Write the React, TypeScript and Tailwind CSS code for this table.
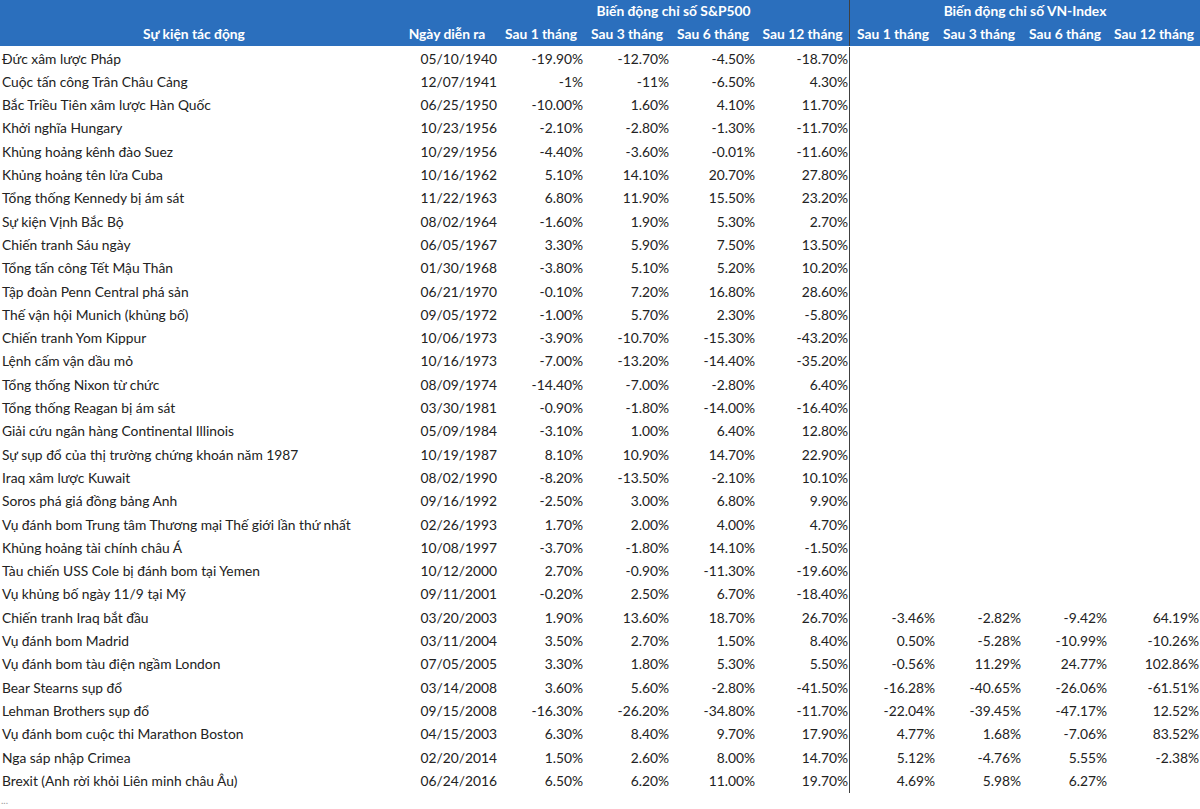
import React from "react";

type Row = [string, string, string[], string[]];

const rows: Row[] = [
  ["Đức xâm lược Pháp", "05/10/1940", ["-19.90%", "-12.70%", "-4.50%", "-18.70%"], []],
  ["Cuộc tấn công Trân Châu Cảng", "12/07/1941", ["-1%", "-11%", "-6.50%", "4.30%"], []],
  ["Bắc Triều Tiên xâm lược Hàn Quốc", "06/25/1950", ["-10.00%", "1.60%", "4.10%", "11.70%"], []],
  ["Khởi nghĩa Hungary", "10/23/1956", ["-2.10%", "-2.80%", "-1.30%", "-11.70%"], []],
  ["Khủng hoảng kênh đào Suez", "10/29/1956", ["-4.40%", "-3.60%", "-0.01%", "-11.60%"], []],
  ["Khủng hoảng tên lửa Cuba", "10/16/1962", ["5.10%", "14.10%", "20.70%", "27.80%"], []],
  ["Tổng thống Kennedy bị ám sát", "11/22/1963", ["6.80%", "11.90%", "15.50%", "23.20%"], []],
  ["Sự kiện Vịnh Bắc Bộ", "08/02/1964", ["-1.60%", "1.90%", "5.30%", "2.70%"], []],
  ["Chiến tranh Sáu ngày", "06/05/1967", ["3.30%", "5.90%", "7.50%", "13.50%"], []],
  ["Tổng tấn công Tết Mậu Thân", "01/30/1968", ["-3.80%", "5.10%", "5.20%", "10.20%"], []],
  ["Tập đoàn Penn Central phá sản", "06/21/1970", ["-0.10%", "7.20%", "16.80%", "28.60%"], []],
  ["Thế vận hội Munich (khủng bố)", "09/05/1972", ["-1.00%", "5.70%", "2.30%", "-5.80%"], []],
  ["Chiến tranh Yom Kippur", "10/06/1973", ["-3.90%", "-10.70%", "-15.30%", "-43.20%"], []],
  ["Lệnh cấm vận dầu mỏ", "10/16/1973", ["-7.00%", "-13.20%", "-14.40%", "-35.20%"], []],
  ["Tổng thống Nixon từ chức", "08/09/1974", ["-14.40%", "-7.00%", "-2.80%", "6.40%"], []],
  ["Tổng thống Reagan bị ám sát", "03/30/1981", ["-0.90%", "-1.80%", "-14.00%", "-16.40%"], []],
  ["Giải cứu ngân hàng Continental Illinois", "05/09/1984", ["-3.10%", "1.00%", "6.40%", "12.80%"], []],
  ["Sự sụp đổ của thị trường chứng khoán năm 1987", "10/19/1987", ["8.10%", "10.90%", "14.70%", "22.90%"], []],
  ["Iraq xâm lược Kuwait", "08/02/1990", ["-8.20%", "-13.50%", "-2.10%", "10.10%"], []],
  ["Soros phá giá đồng bảng Anh", "09/16/1992", ["-2.50%", "3.00%", "6.80%", "9.90%"], []],
  ["Vụ đánh bom Trung tâm Thương mại Thế giới lần thứ nhất", "02/26/1993", ["1.70%", "2.00%", "4.00%", "4.70%"], []],
  ["Khủng hoảng tài chính châu Á", "10/08/1997", ["-3.70%", "-1.80%", "14.10%", "-1.50%"], []],
  ["Tàu chiến USS Cole bị đánh bom tại Yemen", "10/12/2000", ["2.70%", "-0.90%", "-11.30%", "-19.60%"], []],
  ["Vụ khủng bố ngày 11/9 tại Mỹ", "09/11/2001", ["-0.20%", "2.50%", "6.70%", "-18.40%"], []],
  ["Chiến tranh Iraq bắt đầu", "03/20/2003", ["1.90%", "13.60%", "18.70%", "26.70%"], ["-3.46%", "-2.82%", "-9.42%", "64.19%"]],
  ["Vụ đánh bom Madrid", "03/11/2004", ["3.50%", "2.70%", "1.50%", "8.40%"], ["0.50%", "-5.28%", "-10.99%", "-10.26%"]],
  ["Vụ đánh bom tàu điện ngầm London", "07/05/2005", ["3.30%", "1.80%", "5.30%", "5.50%"], ["-0.56%", "11.29%", "24.77%", "102.86%"]],
  ["Bear Stearns sụp đổ", "03/14/2008", ["3.60%", "5.60%", "-2.80%", "-41.50%"], ["-16.28%", "-40.65%", "-26.06%", "-61.51%"]],
  ["Lehman Brothers sụp đổ", "09/15/2008", ["-16.30%", "-26.20%", "-34.80%", "-11.70%"], ["-22.04%", "-39.45%", "-47.17%", "12.52%"]],
  ["Vụ đánh bom cuộc thi Marathon Boston", "04/15/2003", ["6.30%", "8.40%", "9.70%", "17.90%"], ["4.77%", "1.68%", "-7.06%", "83.52%"]],
  ["Nga sáp nhập Crimea", "02/20/2014", ["1.50%", "2.60%", "8.00%", "14.70%"], ["5.12%", "-4.76%", "5.55%", "-2.38%"]],
  ["Brexit (Anh rời khỏi Liên minh châu Âu)", "06/24/2016", ["6.50%", "6.20%", "11.00%", "19.70%"], ["4.69%", "5.98%", "6.27%", ""]],
];

const sub = ["Sau 1 tháng", "Sau 3 tháng", "Sau 6 tháng", "Sau 12 tháng"];
const grid =
  "grid grid-cols-[388px_110px_86px_86px_86px_94px_86px_86px_86px_92px]";

export default function App() {
  return (
    <div
      className="w-[1200px] h-[809px] bg-white overflow-hidden text-[#222222] text-[13.8px]"
      style={{ fontFamily: "Lato, 'Noto Sans', sans-serif" }}
    >
      <div className="bg-[#2b6fbd] text-white font-bold">
        <div className={`${grid} h-[23px] items-center`}>
          <div className="col-span-2" />
          <div className="col-span-4 h-full flex items-center justify-center border-r border-[#404040]">
            Biến động chỉ số S&amp;P500
          </div>
          <div className="col-span-4 text-center">Biến động chỉ số VN-Index</div>
        </div>
        <div className={`${grid} h-[23.3px] items-center`}>
          <div className="text-center">Sự kiện tác động</div>
          <div className="text-center pl-[8px]">Ngày diễn ra</div>
          {sub.map((s, i) => (
            <div
              key={"a" + i}
              className={`text-center h-full flex items-center justify-center ${i === 3 ? "border-r border-[#404040]" : ""}`}
            >
              {s}
            </div>
          ))}
          {sub.map((s, i) => (
            <div key={"b" + i} className="text-center">
              {s}
            </div>
          ))}
        </div>
      </div>
      <div className="pt-[1px]">
        {rows.map((r, idx) => (
          <div key={idx} className={`${grid} h-[23.3px] items-center`}>
            <div className="pl-[2px] whitespace-nowrap">{r[0]}</div>
            <div className="text-right pr-[1px]">{r[1]}</div>
            {r[2].map((v, i) => (
              <div
                key={"s" + i}
                className={`text-right pr-[1px] h-full flex items-center justify-end ${i === 3 ? "border-r border-[#404040]" : ""}`}
              >
                {v}
              </div>
            ))}
            {[0, 1, 2, 3].map((i) => (
              <div key={"v" + i} className="text-right pr-[1px]">
                {r[3][i] ?? ""}
              </div>
            ))}
          </div>
        ))}
      </div>
      <div className="pl-[1px] text-[10px] leading-[10px] text-[#9a9a9a] mt-[2px]">...</div>
    </div>
  );
}
